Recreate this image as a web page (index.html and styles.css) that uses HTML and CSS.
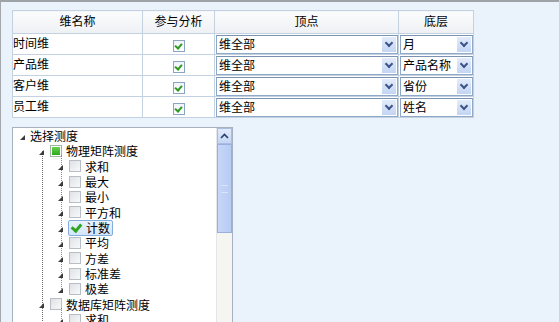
FILE: index.html
```html
<!DOCTYPE html>
<html>
<head>
  <title>维度设置</title>
  <link rel="stylesheet" href="styles.css">
</head>
<body>
  <div class="frame">
    <!-- Tabla de dimensiones -->
    <table class="dims">
      <colgroup>
        <col class="c-name"><col class="c-check"><col class="c-top"><col class="c-bottom">
      </colgroup>
      <tr>
        <th>维名称</th><th>参与分析</th><th>顶点</th><th>底层</th>
      </tr>
      <tr>
        <td class="name">时间维</td>
        <td class="center"><span class="chk on"></span></td>
        <td><div class="combo"><span>维全部</span><i class="drop"></i></div></td>
        <td><div class="combo"><span>月</span><i class="drop"></i></div></td>
      </tr>
      <tr>
        <td class="name">产品维</td>
        <td class="center"><span class="chk on"></span></td>
        <td><div class="combo"><span>维全部</span><i class="drop"></i></div></td>
        <td><div class="combo"><span>产品名称</span><i class="drop"></i></div></td>
      </tr>
      <tr>
        <td class="name">客户维</td>
        <td class="center"><span class="chk on"></span></td>
        <td><div class="combo"><span>维全部</span><i class="drop"></i></div></td>
        <td><div class="combo"><span>省份</span><i class="drop"></i></div></td>
      </tr>
      <tr>
        <td class="name">员工维</td>
        <td class="center"><span class="chk on"></span></td>
        <td><div class="combo"><span>维全部</span><i class="drop"></i></div></td>
        <td><div class="combo"><span>姓名</span><i class="drop"></i></div></td>
      </tr>
    </table>

    <!-- Árbol de medidas -->
    <div class="treebox">
      <div class="tree">
        <div class="node l0"><i class="arr"></i><span class="label">选择测度</span></div>
        <div class="group">
          <div class="node l1"><i class="arr"></i><span class="box part"></span><span class="label">物理矩阵测度</span></div>
          <div class="sub">
            <div class="node l2"><i class="arr"></i><span class="box"></span><span class="label">求和</span></div>
            <div class="node l2"><i class="arr"></i><span class="box"></span><span class="label">最大</span></div>
            <div class="node l2"><i class="arr"></i><span class="box"></span><span class="label">最小</span></div>
            <div class="node l2"><i class="arr"></i><span class="box"></span><span class="label">平方和</span></div>
            <div class="node l2"><i class="arr"></i><span class="sel"><span class="box tick"></span><span class="label">计数</span></span></div>
            <div class="node l2"><i class="arr"></i><span class="box"></span><span class="label">平均</span></div>
            <div class="node l2"><i class="arr"></i><span class="box"></span><span class="label">方差</span></div>
            <div class="node l2"><i class="arr"></i><span class="box"></span><span class="label">标准差</span></div>
            <div class="node l2"><i class="arr"></i><span class="box"></span><span class="label">极差</span></div>
          </div>
          <div class="node l1"><i class="arr"></i><span class="box"></span><span class="label">数据库矩阵测度</span></div>
          <div class="sub">
            <div class="node l2"><i class="arr"></i><span class="box"></span><span class="label">求和</span></div>
          </div>
        </div>
      </div>
      <div class="vscroll">
        <div class="sb-up">
          <svg width="9" height="6" viewBox="0 0 9 6"><path d="M1 5 L4.5 1.5 L8 5" fill="none" stroke="#2b3f6b" stroke-width="1.6"/></svg>
        </div>
        <div class="sb-thumb"><span class="grip"></span></div>
        <div class="sb-track"></div>
      </div>
    </div>
  </div>
</body>
</html>
```

FILE: styles.css
```css
/* Página */
body {
  margin: 0;
  font-family: "Noto Sans CJK SC", "Noto Sans", sans-serif;
  font-size: 12px;
  color: #000;
  overflow: hidden;
}

.frame {
  box-sizing: border-box;
  height: 322px;
  background-color: #eaf2fb;
  border-top: 2px solid #9ea3a8;
  border-left: 1px solid #a4a8ad;
  padding: 8px 0 0 11px;
}

/* Tabla */
.dims {
  border-collapse: collapse;
  table-layout: fixed;
  width: 461px;
}

.c-name { width: 130px; }
.c-check { width: 72px; }
.c-top { width: 184px; }
.c-bottom { width: 75px; }

.dims th {
  height: 19px;
  padding: 0 0 3px;
  line-height: 16px;
  font-weight: normal;
  background: linear-gradient(#fbfcfd, #eef1f4);
  border: 1px solid #c3d1e0;
}

.dims td {
  height: 20px;
  padding: 0;
  background-color: #fff;
  border: 1px solid #c3d1e0;
}

.dims td.name {
  height: 17px;
  padding-bottom: 3px;
  line-height: 16px;
}

.dims td.center {
  text-align: center;
}

.chk {
  display: inline-block;
  box-sizing: border-box;
  width: 12px;
  height: 12px;
  margin-top: 4px;
  border: 1px solid #8aa4c2;
  background: linear-gradient(#eef4fa, #fff);
  position: relative;
  vertical-align: top;
}

.chk.on::after {
  content: "";
  position: absolute;
  left: 2px;
  top: 1px;
  width: 3px;
  height: 5px;
  border-right: 2px solid #2e9a1e;
  border-bottom: 2px solid #2e9a1e;
  transform: rotate(40deg);
}

/* Combos */
.combo {
  box-sizing: border-box;
  height: 19px;
  margin: 0 0 0 1px;
  border: 1px solid #8ea9c7;
  border-top-color: #7a93b2;
  background-color: #fff;
  display: flex;
  align-items: center;
  padding-left: 2px;
}

.combo span {
  flex: 1;
  line-height: 15px;
  padding-bottom: 2px;
  white-space: nowrap;
}

.drop {
  width: 14px;
  height: 15px;
  margin-right: 1px;
  background: linear-gradient(#e3ecfb, #c3d5f3);
  position: relative;
}

.drop::after {
  content: "";
  position: absolute;
  left: 4px;
  top: 3px;
  width: 4px;
  height: 4px;
  border-right: 2px solid #3c5488;
  border-bottom: 2px solid #3c5488;
  transform: rotate(45deg);
}

/* Árbol */
.treebox {
  box-sizing: border-box;
  width: 221px;
  height: 200px;
  margin-top: 9px;
  border: 1px solid #a7b2c0;
  background-color: #fff;
  display: flex;
  overflow: hidden;
}

.tree {
  flex: 1;
}

.node {
  height: 15.33px;
  display: flex;
  align-items: center;
  white-space: nowrap;
  position: relative;
}

.label {
  line-height: 15px;
}

.node.l0 { padding-left: 7px; }
.node.l1 { padding-left: 26px; }
.node.l2 { padding-left: 45px; }

.arr {
  width: 0;
  height: 0;
  border-left: 5px solid transparent;
  border-bottom: 5px solid #3c3c3c;
  margin: 3px 5px 0 0;
}

.node.l1 .arr,
.node.l2 .arr {
  margin-right: 6px;
}

.group {
  position: relative;
}

.group::before {
  content: "";
  position: absolute;
  left: 29px;
  top: 8px;
  bottom: 0;
  border-left: 1px dotted #6a6a6a;
}

.sub {
  position: relative;
}

.sub::before {
  content: "";
  position: absolute;
  left: 48px;
  top: -4px;
  bottom: 6px;
  border-left: 1px dotted #8a8a8a;
}

.box {
  box-sizing: border-box;
  width: 12px;
  height: 12px;
  border: 1px solid #b8bec6;
  background: linear-gradient(135deg, #dfe2e6, #f8f9fa);
  margin-right: 4px;
  position: relative;
}

.box.part {
  border-color: #9fb5a0;
  background: #fff;
}

.box.part::after {
  content: "";
  position: absolute;
  left: 1px;
  top: 1px;
  right: 1px;
  bottom: 1px;
  background: linear-gradient(#6ad24e, #2ea71c);
}

.box.tick {
  border: none;
  background: none;
}

.box.tick::after {
  content: "";
  position: absolute;
  left: 3px;
  top: 0;
  width: 4px;
  height: 7px;
  border-right: 3px solid #31a51f;
  border-bottom: 3px solid #31a51f;
  transform: rotate(40deg);
}

.sel {
  display: flex;
  align-items: center;
  height: 14px;
  padding: 0 2px 0 0;
  margin-left: -1px;
  border: 1px solid #84acdd;
  background: linear-gradient(#eaf3fd, #d4e5fa);
  border-radius: 2px;
}

.sel .box {
  margin-left: 1px;
}

/* Barra de desplazamiento */
.vscroll {
  width: 15px;
  display: flex;
  flex-direction: column;
  border-left: 1px solid #e4e6ea;
}

.sb-up {
  height: 16px;
  box-sizing: border-box;
  border: 1px solid #a9bde2;
  background: linear-gradient(#e2ebfb, #c4d6f6);
  display: flex;
  align-items: center;
  justify-content: center;
}

.sb-thumb {
  height: 89px;
  box-sizing: border-box;
  border: 1px solid #97b0de;
  background: linear-gradient(90deg, #c6d6f7, #b7cbf4);
  position: relative;
}

.grip {
  position: absolute;
  left: 3px;
  top: 40px;
  width: 7px;
  height: 6px;
  border-top: 1px solid #dbe5fa;
  border-bottom: 1px solid #dbe5fa;
}

.sb-track {
  flex: 1;
  background-color: #f5f6f1;
}
```
